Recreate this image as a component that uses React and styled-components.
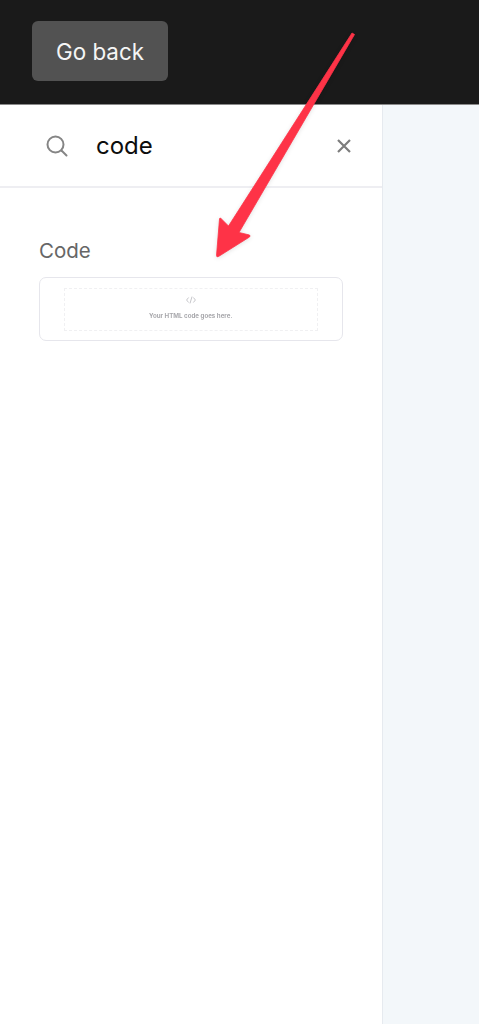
import styled, { createGlobalStyle } from "styled-components";

const GlobalStyle = createGlobalStyle`
  html, body {
    margin: 0;
    padding: 0;
    background: #fff;
  }
  body {
    font-family: Inter, "Liberation Sans", sans-serif;
  }
`;

const Page = styled.div`
  position: relative;
  width: 479px;
  height: 1024px;
  overflow: hidden;
  display: flex;
  flex-direction: column;
`;

const TopBar = styled.header`
  height: 105px;
  flex: none;
  box-sizing: border-box;
  background: #1a1a1a;
  border-bottom: 1px solid #8a8a8a;
  padding: 21px 0 0 32px;
`;

const BackButton = styled.button`
  display: block;
  width: 136px;
  height: 60px;
  padding: 0;
  border: none;
  border-radius: 6px;
  background: #525252;
  color: #f5f5f5;
  font-family: inherit;
  font-size: 22.4px;
  font-weight: 400;
`;

const Body = styled.div`
  flex: 1;
  display: flex;
`;

const Sidebar = styled.aside`
  width: 383px;
  flex: none;
  box-sizing: border-box;
  background: #fff;
  border-right: 1px solid #e6eaef;
`;

const SearchRow = styled.div`
  height: 83px;
  box-sizing: border-box;
  display: flex;
  align-items: center;
  padding: 0 30px 0 46px;
  border-bottom: 2px solid #eeeef2;
`;

const SearchText = styled.span`
  flex: 1;
  margin-left: 28px;
  font-size: 24px;
  color: #0d0d0d;
`;

const Section = styled.section`
  padding: 51px 39px 0;
`;

const SectionTitle = styled.h2`
  margin: 0 0 14px;
  font-size: 20.5px;
  line-height: 24px;
  font-weight: 400;
  color: #666;
`;

const Card = styled.div`
  width: 304px;
  height: 64px;
  box-sizing: border-box;
  padding: 9.5px 24px 9.5px 23.5px;
  border: 1.5px solid #e6e6ec;
  border-radius: 7px;
`;

const Placeholder = styled.div`
  height: 43px;
  box-sizing: border-box;
  border: 1px dashed #f0f0f2;
  display: flex;
  flex-direction: column;
  align-items: center;
  padding-top: 7px;
  gap: 8px;
  filter: blur(0.3px);
`;

const PlaceholderText = styled.span`
  font-size: 6.2px;
  line-height: 8px;
  font-weight: 700;
  color: #a8a8ac;
`;

const Canvas = styled.main`
  flex: 1;
  background: #f3f7fa;
`;

const ArrowLayer = styled.svg`
  position: absolute;
  left: 0;
  top: 0;
  width: 479px;
  height: 1024px;
  pointer-events: none;
  filter: drop-shadow(0 1px 2px rgba(0, 0, 0, 0.12));
`;

const SearchIcon = () => (
  <svg width="22" height="22" viewBox="0 0 22 22" fill="none" stroke="#858585" strokeWidth="2" strokeLinecap="round">
    <circle cx="9.5" cy="9.5" r="8" />
    <path d="M15.5 15.5l5 5" />
  </svg>
);

const CloseIcon = () => (
  <svg width="16" height="16" viewBox="0 0 16 16" fill="none" stroke="#7d7d7d" strokeWidth="2.2">
    <path d="M2 2l12 12M14 2L2 14" />
  </svg>
);

const CodeIcon = () => (
  <svg width="10" height="8" viewBox="0 0 10 8" fill="none" stroke="#b8b8bc" strokeWidth="0.8">
    <path d="M2.6 1.5L.6 4l2 2.5M7.4 1.5L9.4 4l-2 2.5M6 .6L4 7.4" />
  </svg>
);

export default function App() {
  return (
    <>
      <GlobalStyle />
      <Page>
        <TopBar>
          <BackButton>Go back</BackButton>
        </TopBar>
        <Body>
          <Sidebar>
            <SearchRow>
              <SearchIcon />
              <SearchText>code</SearchText>
              <CloseIcon />
            </SearchRow>
            <Section>
              <SectionTitle>Code</SectionTitle>
              <Card>
                <Placeholder>
                  <CodeIcon />
                  <PlaceholderText>Your HTML code goes here.</PlaceholderText>
                </Placeholder>
              </Card>
            </Section>
          </Sidebar>
          <Canvas />
        </Body>
        <ArrowLayer viewBox="0 0 479 1024">
          <path
            d="M354.5 34.5 L352 33 L228.5 226 L220.5 218 Q219.5 218 219.5 219 L216.5 255.5 Q216.5 257.5 218.5 256.5 L249.5 237 Q250.5 236 249.5 235 L239 232.5 Z"
            fill="#fe3347"
            stroke="#fe3347"
            strokeWidth="0.8"
            strokeLinejoin="round"
          />
        </ArrowLayer>
      </Page>
    </>
  );
}
